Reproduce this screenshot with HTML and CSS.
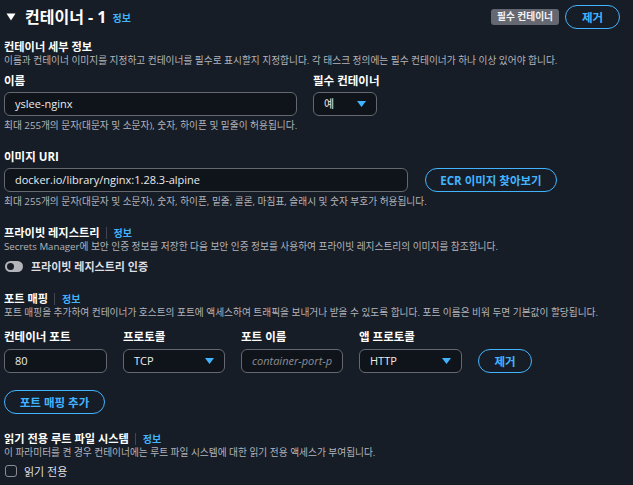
FILE: index.html
```html
<!DOCTYPE html>
<html lang="ko">
<head>
<meta charset="utf-8">
<link rel="stylesheet" href="styles.css">
</head>
<body>
<div class="page">
  <header class="hdr">
    <div class="hdr-left">
      <svg class="caret" width="10" height="8" viewBox="0 0 10 8"><path d="M0.5 0.5 H9.5 L5 7.5 Z" fill="#ffffff"/></svg>
      <h2 class="title">컨테이너 - 1</h2>
      <a class="info">정보</a>
    </div>
    <div class="hdr-right">
      <span class="badge">필수 컨테이너</span>
      <button class="btn btn-remove">제거</button>
    </div>
  </header>

  <section class="block block-first">
    <div class="sec-title">컨테이너 세부 정보</div>
    <div class="desc">이름과 컨테이너 이미지를 지정하고 컨테이너를 필수로 표시할지 지정합니다. 각 태스크 정의에는 필수 컨테이너가 하나 이상 있어야 합니다.</div>
  </section>

  <div class="row row-name">
    <div class="field field-name">
      <div class="label">이름</div>
      <div class="input">yslee-nginx</div>
      <div class="hint">최대 255개의 문자(대문자 및 소문자), 숫자, 하이픈 및 밑줄이 허용됩니다.</div>
    </div>
    <div class="field field-essential">
      <div class="label">필수 컨테이너</div>
      <div class="input select">예<svg class="tri" width="9" height="6" viewBox="0 0 9 6"><path d="M0 0 H9 L4.5 6 Z" fill="#42b4ff"/></svg></div>
    </div>
  </div>

  <div class="block">
    <div class="label">이미지 URI</div>
    <div class="row row-uri">
      <div class="input input-uri">docker.io/library/nginx:1.28.3-alpine</div>
      <button class="btn btn-ecr">ECR 이미지 찾아보기</button>
    </div>
    <div class="hint">최대 255개의 문자(대문자 및 소문자), 숫자, 하이픈, 밑줄, 콜론, 마침표, 슬래시 및 숫자 부호가 허용됩니다.</div>
  </div>

  <section class="block">
    <div class="sec-title">프라이빗 레지스트리<span class="sep"></span><a class="info">정보</a></div>
    <div class="desc">Secrets Manager에 보안 인증 정보를 저장한 다음 보안 인증 정보를 사용하여 프라이빗 레지스트리의 이미지를 참조합니다.</div>
    <div class="toggle-row">
      <span class="toggle"><span class="knob"></span></span>
      <span class="toggle-label">프라이빗 레지스트리 인증</span>
    </div>
  </section>

  <section class="block block-ports">
    <div class="sec-title">포트 매핑<span class="sep"></span><a class="info">정보</a></div>
    <div class="desc">포트 매핑을 추가하여 컨테이너가 호스트의 포트에 액세스하여 트래픽을 보내거나 받을 수 있도록 합니다. 포트 이름은 비워 두면 기본값이 할당됩니다.</div>
    <div class="port-grid">
      <div class="label">컨테이너 포트</div>
      <div class="label">프로토콜</div>
      <div class="label">포트 이름</div>
      <div class="label">앱 프로토콜</div>
      <div></div>
      <div class="input">80</div>
      <div class="input select">TCP<svg class="tri" width="9" height="6" viewBox="0 0 9 6"><path d="M0 0 H9 L4.5 6 Z" fill="#42b4ff"/></svg></div>
      <div class="input placeholder">container-port-p</div>
      <div class="input select">HTTP<svg class="tri" width="9" height="6" viewBox="0 0 9 6"><path d="M0 0 H9 L4.5 6 Z" fill="#42b4ff"/></svg></div>
      <button class="btn btn-remove2">제거</button>
    </div>
  </section>

  <div class="block">
    <button class="btn btn-add">포트 매핑 추가</button>
  </div>

  <section class="block">
    <div class="sec-title">읽기 전용 루트 파일 시스템<span class="sep"></span><a class="info">정보</a></div>
    <div class="desc">이 파라미터를 켠 경우 컨테이너에는 루트 파일 시스템에 대한 읽기 전용 액세스가 부여됩니다.</div>
    <div class="check-row">
      <span class="checkbox"></span>
      <span class="check-label">읽기 전용</span>
    </div>
  </section>
</div>
</body>
</html>
```

FILE: styles.css
```css
* { box-sizing: border-box; }
html, body {
  margin: 0;
  padding: 0;
  background: #161d26;
}
body {
  font-family: "Open Sans", "Noto Sans CJK KR", sans-serif;
  color: #dedee3;
  font-size: 11px;
  overflow: hidden;
}
.page {
  width: 633px;
  height: 485px;
  padding: 0 13px 0 4px;
}
.hdr {
  height: 33px;
  display: flex;
  align-items: center;
  justify-content: space-between;
}
.hdr-left {
  display: flex;
  align-items: center;
  padding-left: 2px;
}
.caret { margin-right: 9px; }
.title {
  margin: 0;
  font-size: 16px;
  font-weight: 700;
  line-height: 24px;
  color: #ffffff;
}
.info {
  color: #42b4ff;
  font-size: 10px;
  font-weight: 700;
  margin-left: 6px;
  line-height: 12px;
}
.title + .info { margin-top: 3px; }
.hdr-right {
  display: flex;
  align-items: center;
  gap: 6px;
}
.badge {
  background: #656871;
  color: #f3f3f7;
  font-size: 9.7px;
  font-weight: 700;
  line-height: 16px;
  padding: 0 6px;
  border-radius: 3px;
}
.btn {
  font-family: inherit;
  background: transparent;
  border: 1.5px solid #42b4ff;
  color: #42b4ff;
  font-weight: 700;
  font-size: 11.5px;
  border-radius: 20px;
  height: 24px;
  padding: 0 15px;
  cursor: pointer;
}
.btn-remove { width: 55px; padding: 0; }
.block { margin-top: 17px; }
.block-first { margin-top: 6px; }
.sec-title {
  font-weight: 700;
  font-size: 11.2px;
  line-height: 16px;
  color: #ffffff;
  display: flex;
  align-items: center;
}
.sec-title .info { margin-left: 0; }
.sep {
  width: 1px;
  height: 12px;
  background: #424650;
  margin: 0 7px 0 6px;
}
.desc, .hint {
  font-size: 9.7px;
  line-height: 12px;
  color: #b4b4bb;
  white-space: nowrap;
}
.label {
  font-weight: 700;
  font-size: 11.5px;
  line-height: 16px;
  color: #ffffff;
  margin-bottom: 3px;
  white-space: nowrap;
}
.row { display: flex; }
.row-name { margin-top: 6px; gap: 16px; }
.field-name { width: 293px; }
.field-essential { width: 64px; }
.input {
  height: 24px;
  border: 1px solid #656871;
  border-radius: 6px;
  background: #0f141a;
  color: #e9ebed;
  font-size: 11px;
  line-height: 22px;
  padding: 0 10px;
  white-space: nowrap;
  overflow: hidden;
}
.select {
  display: flex;
  align-items: center;
  justify-content: space-between;
}
.hint { margin-top: 4px; }
.row-uri { gap: 17px; align-items: center; }
.input-uri { width: 404px; }
.btn-ecr { width: 132px; padding: 0; }
.toggle-row {
  display: flex;
  align-items: center;
  margin-top: 5px;
  height: 16px;
}
.toggle {
  width: 18px;
  height: 11px;
  border-radius: 6px;
  background: #b4b4bb;
  position: relative;
  margin-left: 1px;
  margin-right: 8px;
}
.knob {
  position: absolute;
  left: 2px;
  top: 2px;
  width: 7px;
  height: 7px;
  border-radius: 50%;
  background: #161d26;
}
.toggle-label {
  font-size: 11px;
  font-weight: 700;
  color: #dedee3;
}
.port-grid {
  margin-top: 10px;
  display: grid;
  grid-template-columns: 103px 102px 102px 103px 54px;
  column-gap: 16px;
  align-items: end;
}
.port-grid .label { margin-bottom: 4px; }
.placeholder {
  font-style: italic;
  color: #8c8c94;
}
.btn-remove2 { width: 54px; padding: 0; }
.btn-add { width: 101px; padding: 0; }
.check-row {
  display: flex;
  align-items: center;
  margin-top: 4px;
  height: 16px;
}
.checkbox {
  width: 12px;
  height: 12px;
  border: 1px solid #8c8c94;
  border-radius: 3px;
  margin-left: 1px;
  margin-right: 7px;
}
.check-label {
  font-size: 11px;
  color: #dedee3;
}
```
